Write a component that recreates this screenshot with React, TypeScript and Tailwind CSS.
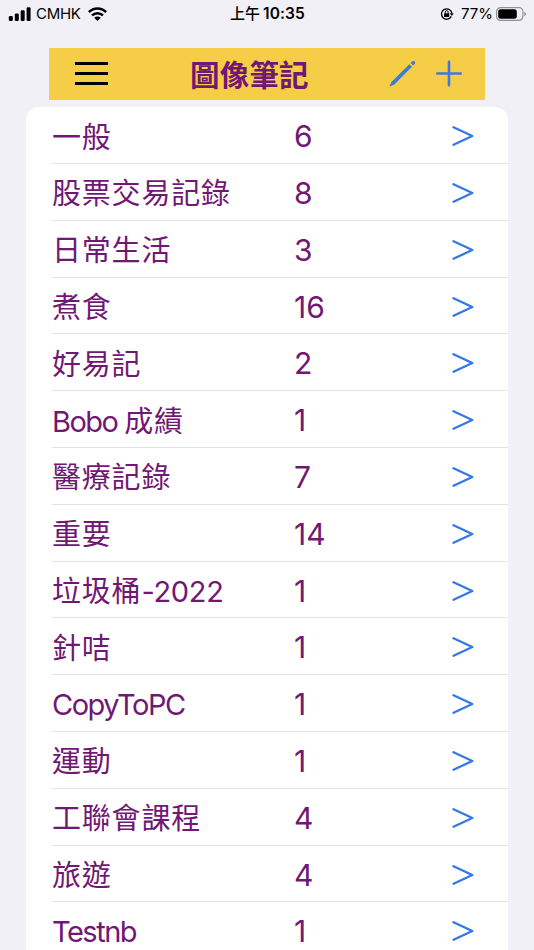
const notebooks = [
  { name: "一般", count: 6 },
  { name: "股票交易記錄", count: 8 },
  { name: "日常生活", count: 3 },
  { name: "煮食", count: 16 },
  { name: "好易記", count: 2 },
  { latin: "Bobo ", name: "成績", count: 1 },
  { name: "醫療記錄", count: 7 },
  { name: "重要", count: 14 },
  { name: "垃圾桶", suffix: "-2022", count: 1 },
  { name: "針咭", count: 1 },
  { latin: "CopyToPC", count: 1 },
  { name: "運動", count: 1 },
  { name: "工聯會課程", count: 4 },
  { name: "旅遊", count: 4 },
  { latin: "Testnb", count: 1 },
];

function StatusBar() {
  return (
    <div className="grid h-7 grid-cols-3 items-center pl-2 pr-[7px] text-black">
      <div className="flex items-center">
        <svg width="23" height="14" viewBox="0 0 23 14">
          <rect x="0.8" y="9" width="4" height="5" rx="1.2" />
          <rect x="6.8" y="6.4" width="4" height="7.6" rx="1.2" />
          <rect x="12.7" y="3.3" width="4" height="10.7" rx="1.2" />
          <rect x="18.6" y="0.2" width="4" height="13.8" rx="1.2" />
        </svg>
        <span className="ml-[5px] text-[15px] tracking-[-0.3px]">CMHK</span>
        <svg className="ml-[7px]" width="19" height="14" viewBox="0 0 19 14">
          <g fill="none" stroke="currentColor" strokeWidth="2.5">
            <path d="M0.9 5.1C5.8 0.3 13.2 0.3 18.1 5.1" />
            <path d="M4 8.4C7.2 5.4 11.8 5.4 15 8.4" />
          </g>
          <path d="M9.5 14L6.2 10.7C8.1 9 10.9 9 12.8 10.7Z" />
        </svg>
      </div>
      <div className="flex items-center justify-center whitespace-nowrap text-[15px] font-semibold">
        <span className="font-medium">上午</span>
        <span className="ml-[3px] text-[15.5px] tracking-[0.1px]">10:35</span>
      </div>
      <div className="flex items-center justify-end">
        <svg width="14" height="14" viewBox="0 0 14 14">
          <path
            d="M11.3 9.4A5.2 5.2 0 1 1 11.8 6.2"
            fill="none"
            stroke="currentColor"
            strokeWidth="1.3"
          />
          <path d="M9.8 6.2H13.8L11.8 9Z" />
          <rect x="4.1" y="6.3" width="5.2" height="3.8" rx="0.6" />
          <path
            d="M5.2 6.5V5.2a1.5 1.5 0 0 1 3 0V6.5"
            fill="none"
            stroke="currentColor"
            strokeWidth="1"
          />
        </svg>
        <span className="ml-[7px] text-[15px]">77%</span>
        <svg className="ml-[3px]" width="31" height="14" viewBox="0 0 31 14">
          <rect
            x="0.6"
            y="0.6"
            width="26.3"
            height="12.8"
            rx="4"
            fill="none"
            stroke="#929296"
            strokeWidth="1.2"
          />
          <rect x="2.2" y="2.2" width="18.6" height="9.6" rx="2.4" />
          <path d="M28.3 4.8C30.6 5.6 30.6 8.4 28.3 9.2Z" fill="#929296" />
        </svg>
      </div>
    </div>
  );
}

function Header() {
  return (
    <header className="mx-[49px] mt-5 flex h-[51.5px] items-center bg-[#f5cd46]">
      <button className="ml-[26px] flex w-[33px] flex-col gap-[7px]">
        <span className="h-[3px] w-full bg-black" />
        <span className="h-[3px] w-full bg-black" />
        <span className="h-[3px] w-full bg-black" />
      </button>
      <h1 className="ml-[82px] flex-1 pt-[3px] text-[29.5px] font-bold leading-none tracking-[0.2px] text-[#701873]">
        圖像筆記
      </h1>
      <button className="mr-5 text-[#3e79dc]">
        <svg width="27" height="27" viewBox="0 0 27 27" fill="currentColor">
          <path d="M20.4 4.2L23 6.8L5.3 24.4L1.4 26.3Q0.3 26.6 0.7 25.4L2.7 21.8Z" />
          <path d="M21.6 3L23.3 1.3Q24.6 0.4 25.8 1.5Q26.8 2.7 25.8 3.9L24.1 5.5Z" />
        </svg>
      </button>
      <button className="mr-[23px] text-[#3e79dc]">
        <svg width="26" height="27" viewBox="0 0 26 27">
          <path
            d="M13 1.8V25.2M1.3 13.5H24.7"
            stroke="currentColor"
            strokeWidth="2.6"
            strokeLinecap="round"
          />
        </svg>
      </button>
    </header>
  );
}

export default function App() {
  return (
    <main className="h-[950px] w-full overflow-hidden bg-[#f1f0f6] font-['Inter','Noto_Sans_CJK_TC',sans-serif]">
      <StatusBar />
      <Header />
      <ul className="mx-[26px] mt-[7.8px] rounded-t-[13px] bg-white pl-[26px] text-[29px] text-[#701873]">
        {notebooks.map((item, i) => (
          <li
            key={i}
            className="flex h-[56.8px] items-center border-b border-[#e2e2e5] pr-[34px] pt-[2px] leading-none"
          >
            <span className="w-[242px] whitespace-pre">
              {item.latin && (
                <span className="tracking-[-1.5px]">{item.latin}</span>
              )}
              {item.name && (
                <span className="inline-block pt-[2px] tracking-[0.8px]">
                  {item.name}
                </span>
              )}
              {item.suffix && (
                <span className="tracking-[-0.3px]">{item.suffix}</span>
              )}
            </span>
            <span className="flex-1 text-[30px]">{item.count}</span>
            <svg
              className="text-[#3577e6]"
              width="22"
              height="20"
              viewBox="0 0 22 20"
              fill="none"
            >
              <path
                d="M1.5 1.3L20.3 10L1.5 18.7"
                stroke="currentColor"
                strokeWidth="2.3"
                strokeLinecap="round"
                strokeLinejoin="round"
              />
            </svg>
          </li>
        ))}
      </ul>
    </main>
  );
}
